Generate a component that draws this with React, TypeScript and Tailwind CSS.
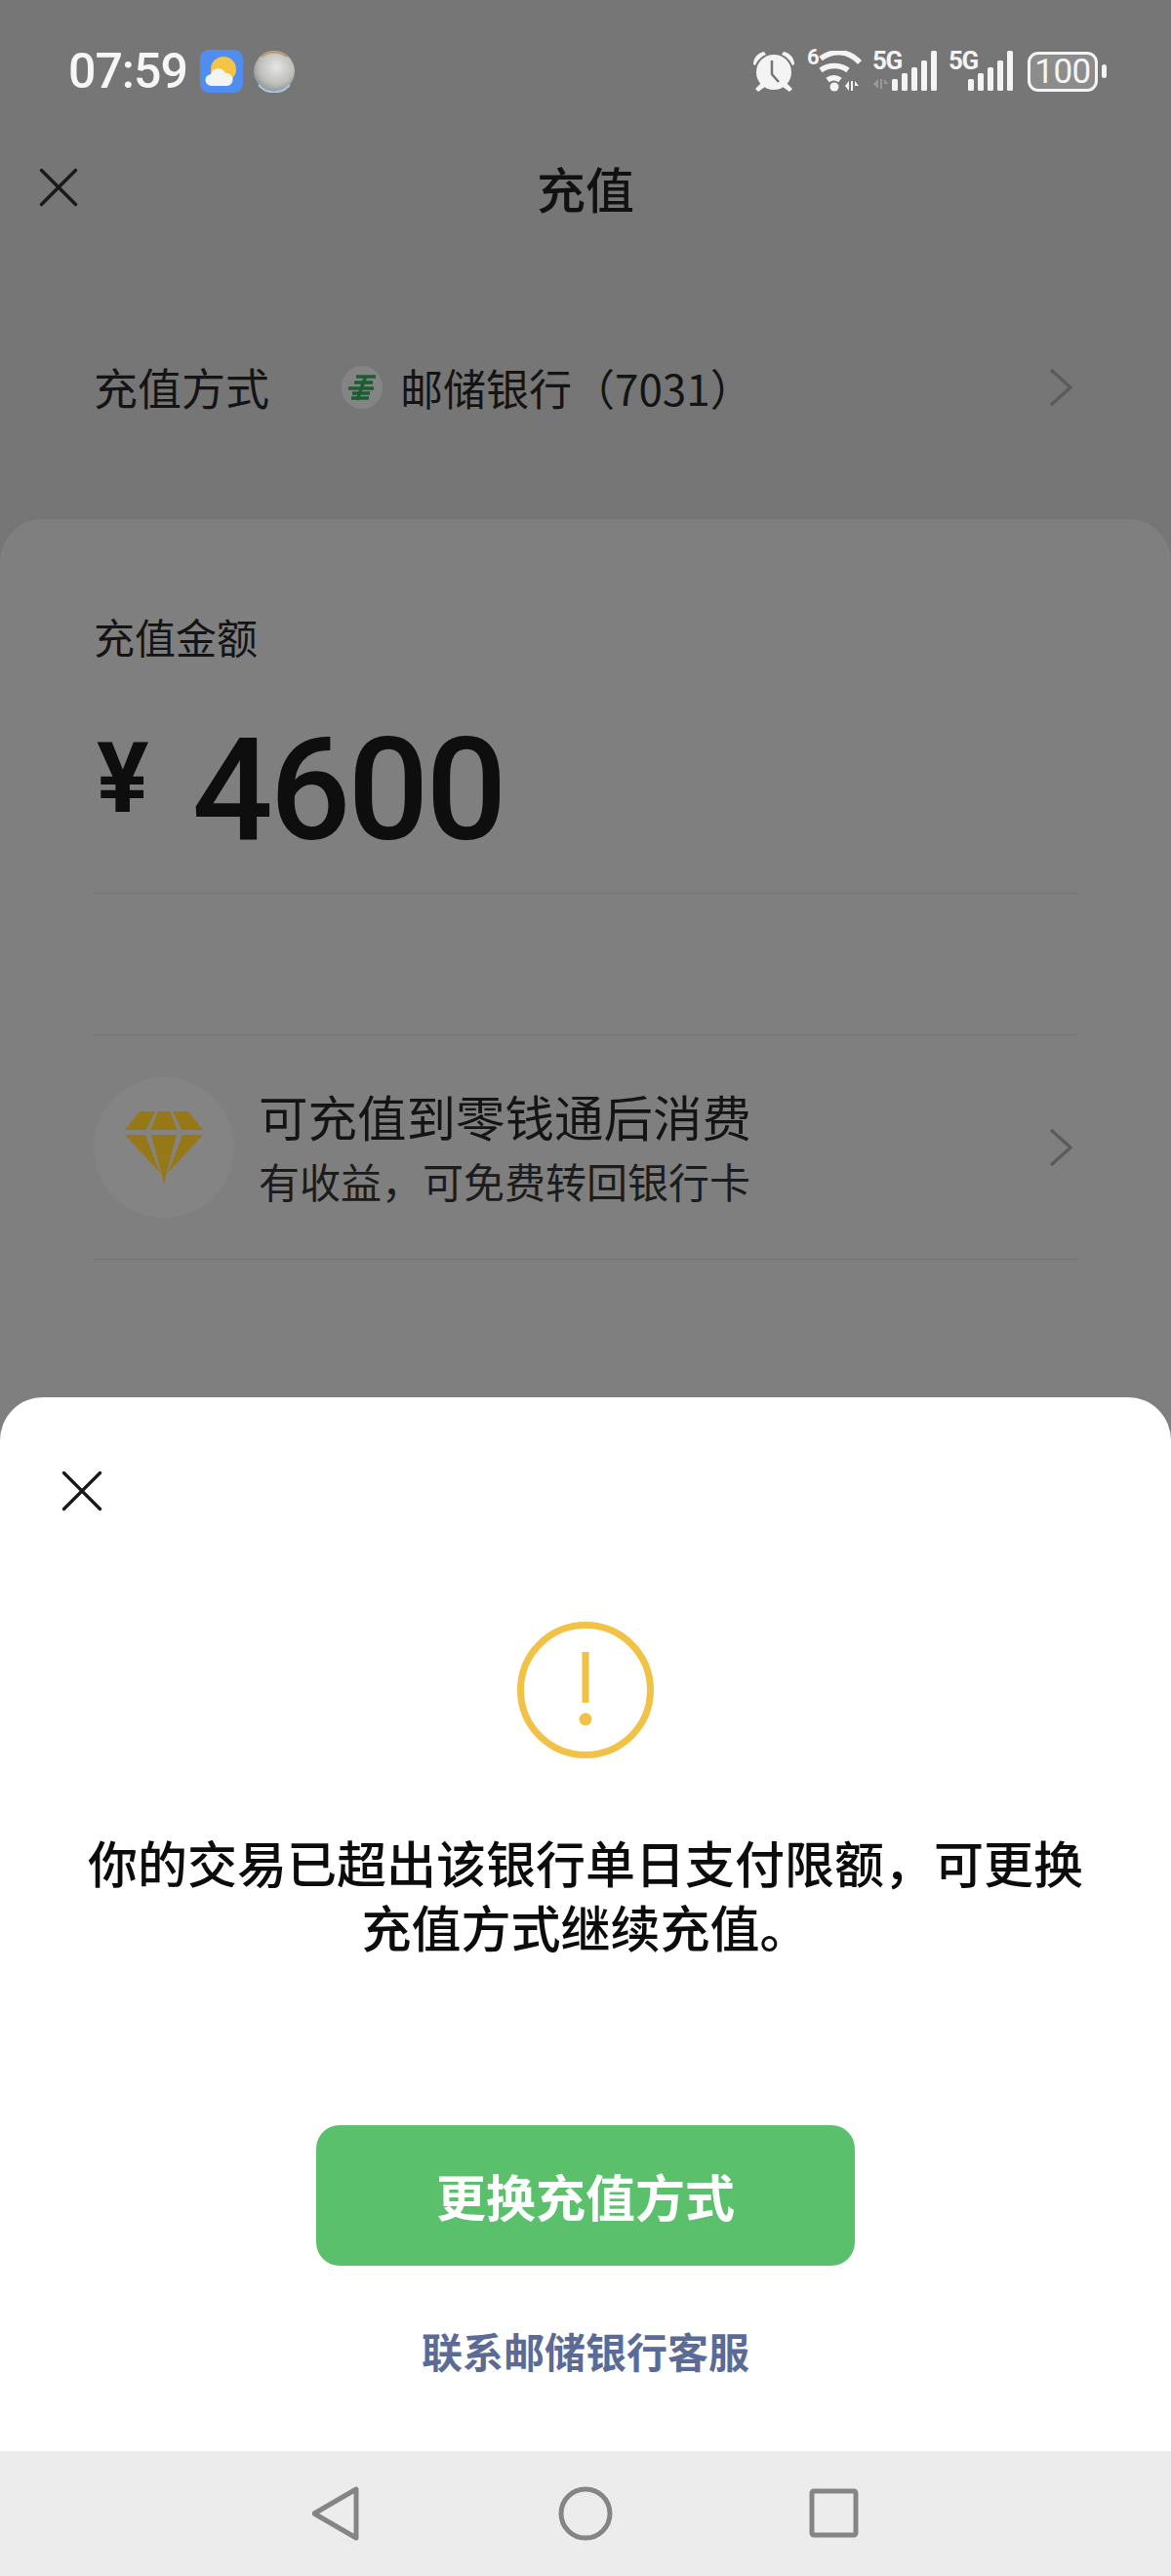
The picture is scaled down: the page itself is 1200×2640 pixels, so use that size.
import { X } from 'lucide-react';

const cjk = "font-['Noto_Sans_CJK_SC',sans-serif]";

function WeatherIcon() {
  return (
    <svg width="44" height="44" viewBox="0 0 44 44">
      <rect width="44" height="44" rx="9" fill="#4f8ef0" />
      <circle cx="24" cy="20" r="13" fill="#f6c445" />
      <path d="M12 37a6 6 0 0 1-1-12 8 8 0 0 1 15-1 6.5 6.5 0 0 1 2 13z" fill="#f2f4f2" />
    </svg>
  );
}

function BubbleIcon() {
  return (
    <svg width="44" height="44" viewBox="0 0 44 44">
      <defs>
        <radialGradient id="bubble" cx="0.55" cy="0.4" r="0.6">
          <stop offset="0" stopColor="#e6e6e4" />
          <stop offset="0.7" stopColor="#bdbdba" />
          <stop offset="1" stopColor="#8f9599" />
        </radialGradient>
      </defs>
      <circle cx="22" cy="22" r="21" fill="url(#bubble)" />
      <path d="M9 7a21 21 0 0 1 26 0" stroke="#b39a6a" strokeWidth="2" fill="none" />
      <path d="M6 36a21 21 0 0 0 32 0" stroke="#a9c6dc" strokeWidth="2" fill="none" />
    </svg>
  );
}

function AlarmIcon() {
  return (
    <svg width="42" height="42" viewBox="0 0 42 42" fill="#f4f4f4">
      <circle cx="21" cy="22" r="18" />
      <path d="M0 14C0 7 5 2 11 1l2 3C8 6 4 10 2 15zM42 14C42 7 37 2 31 1l-2 3c5 2 9 6 11 11z" />
      <path d="M8 33l-6 6 3 3 7-5zM34 33l6 6-3 3-7-5z" />
      <path d="M19 10v14l7 8" stroke="#767676" strokeWidth="2.5" fill="none" />
    </svg>
  );
}

function WifiIcon() {
  return (
    <div className="relative w-[56px] h-[42px]">
      <span className="absolute left-0 top-[-7px] text-[22px] leading-[28px] font-bold text-[#f4f4f4] font-['Roboto',sans-serif]">6</span>
      <svg width="56" height="42" viewBox="0 0 56 42" fill="none" stroke="#f4f4f4" strokeWidth="5.5">
        <path d="M14 8C26-1 42-1 54 12" />
        <path d="M14 20c8-6 20-6 28 0" />
        <path d="M21 30c4-3 9-3 13 0" />
        <circle cx="28" cy="37" r="4.5" fill="#f4f4f4" stroke="none" />
        <path d="M39 36l4-5v10zM45 31h2v10h-2zM49 31l4 5h-4z" fill="#f4f4f4" stroke="none" />
      </svg>
    </div>
  );
}

function SignalIcon({ arrows }: { arrows?: boolean }) {
  return (
    <div className="relative w-[66px] h-[42px]">
      <span className="absolute left-0 top-[-6px] text-[26px] leading-[32px] font-bold tracking-[-1.5px] text-[#f4f4f4] font-['Roboto',sans-serif]">5G</span>
      <svg width="66" height="42" viewBox="0 0 66 42" fill="#f4f4f4">
        {arrows && <path d="M1 34l5-5v10zM8 29h2v10H8zM12 29l4 5h-4z" fill="#9a9a9a" />}
        <rect x="20" y="29" width="6" height="12" rx="1.5" />
        <rect x="30" y="23" width="6" height="18" rx="1.5" />
        <rect x="40" y="17" width="6" height="24" rx="1.5" />
        <rect x="50" y="10" width="6" height="31" rx="1.5" />
        <rect x="60" y="0" width="6" height="41" rx="1.5" />
      </svg>
    </div>
  );
}

function Battery() {
  return (
    <div className="flex items-center gap-[4px]">
      <div className="w-[72px] h-[41px] rounded-[11px] border-[3.5px] border-[#f4f4f4] bg-[#8c8c8c] flex items-center justify-center">
        <span className="text-[35px] leading-none tracking-[-0.5px] text-[#f4f4f4] font-['Roboto',sans-serif]">100</span>
      </div>
      <div className="w-[5px] h-[14px] rounded-full bg-[#f4f4f4]" />
    </div>
  );
}

function BankLogo() {
  return (
    <div className="w-[42px] h-[44px] rounded-full bg-[#848484] flex items-center justify-center">
      <svg width="30" height="28" viewBox="0 0 30 28" fill="none" stroke="#1c5e30" strokeWidth="3.5">
        <path d="M9 3h20M7 9h19M1 15h26M5 20h18M4 25h18" />
        <path d="M19 2L10 27" />
      </svg>
    </div>
  );
}

function Chevron({ className }: { className?: string }) {
  return (
    <svg className={className} width="24" height="38" viewBox="0 0 24 38" fill="none" stroke="#5c5c5c" strokeWidth="3.5">
      <path d="M2 1l20 18L2 37" />
    </svg>
  );
}

function Diamond() {
  return (
    <svg width="80" height="74" viewBox="0 0 80 74" fill="#967818">
      <path d="M15 0h16l-9 19H0z" />
      <path d="M34 0h12l8 19H26z" />
      <path d="M49 0h16l15 19H58z" />
      <path d="M0 24h21l15 39z" />
      <path d="M27 24h26L40 74z" />
      <path d="M59 24h21L44 63z" />
    </svg>
  );
}

export default function App() {
  return (
    <div className={`w-[1200px] h-[2640px] flex flex-col bg-[#767676] overflow-hidden ${cjk}`}>
      {/* Status bar */}
      <div className="h-[146px] pl-[70px] pr-[66px] flex items-center justify-between">
        <div className="flex items-center">
          <span className="text-[50px] font-medium text-[#f6f6f6] tracking-[-1px] font-['Roboto',sans-serif] leading-none">07:59</span>
          <div className="ml-[13px] flex gap-[10px]">
            <WeatherIcon />
            <BubbleIcon />
          </div>
        </div>
        <div className="flex items-center">
          <AlarmIcon />
          <div className="ml-[13px]"><WifiIcon /></div>
          <div className="ml-[11px]"><SignalIcon arrows /></div>
          <div className="ml-[12px]"><SignalIcon /></div>
          <div className="ml-[15px]"><Battery /></div>
        </div>
      </div>

      {/* Header */}
      <div className="relative h-[98px] pb-[6px] flex items-center justify-center">
        <X className="absolute left-[25px] w-[70px] h-[70px] text-[#1a1a1a]" strokeWidth={1.2} />
        <span className="text-[50px] font-medium text-[#111]">充值</span>
      </div>

      {/* Pay method */}
      <div className="h-[288px] pt-[18px] pl-[96px] pr-[101px] flex items-center text-[#141414]">
        <span className="w-[254px] text-[45px]">充值方式</span>
        <BankLogo />
        <span className="ml-[18px] text-[44px]">邮储银行（7031）</span>
        <Chevron className="ml-auto" />
      </div>

      {/* Amount card */}
      <div className="flex-1 -mb-[44px] bg-[#7f7f7f] rounded-t-[44px] px-[96px] flex flex-col">
        <div className="h-[384px] flex flex-col border-b border-[#737373]">
          <span className="mt-[91px] text-[42px] leading-[58px] text-[#141414]">充值金额</span>
          <div className="mt-[57px] flex items-center text-[#0e0e0e] font-['Roboto',sans-serif] font-medium leading-none">
            <span className="ml-[3px] mb-[26px] text-[100px] font-bold">¥</span>
            <span className="ml-[44px] text-[146px] tracking-[-3px]">4600</span>
          </div>
        </div>
        <div className="mt-[144px] h-[231px] flex items-center border-y border-[#737373]">
          <div className="w-[144px] h-[144px] rounded-full bg-[#848484] flex items-center justify-center">
            <Diamond />
          </div>
          <div className="ml-[25px] flex flex-col">
            <span className="text-[50.5px] leading-[68px] text-[#141414]">可充值到零钱通后消费</span>
            <span className="text-[42px] leading-[66px] text-[#1c1c1c]">有收益，可免费转回银行卡</span>
          </div>
          <Chevron className="ml-auto mr-[5px]" />
        </div>
      </div>

      {/* Bottom sheet */}
      <div className="h-[1080px] bg-white rounded-t-[44px] relative flex flex-col items-center">
        <X className="self-start ml-[47px] mt-[59px] w-[74px] h-[74px] text-[#1a1a1a]" strokeWidth={1.1} />
        <svg className="mt-[97px]" width="140" height="140" viewBox="0 0 140 140" fill="none">
          <circle cx="70" cy="70" r="66.5" stroke="#f2c246" strokeWidth="7" />
          <rect x="66.5" y="31" width="7" height="52" fill="#f2c246" />
          <circle cx="70" cy="100" r="6.5" fill="#f2c246" />
        </svg>
        <p className="mt-[73px] w-[1040px] text-center text-[51px] leading-[66px] font-medium text-[#0c0c0c]">
          你的交易已超出该银行单日支付限额，可更换充值方式继续充值。
        </p>
        <button className="mt-[171px] w-[552px] h-[144px] rounded-[24px] bg-[#5ac06c] text-white text-[51px] font-bold">
          更换充值方式
        </button>
        <span className="mt-[58px] text-[42px] leading-[58px] font-bold text-[#5b6b96]">联系邮储银行客服</span>
      </div>

      {/* Navigation bar */}
      <div className="h-[128px] bg-[#ececec] flex items-start justify-center">
        <svg className="mt-[36px]" width="560" height="56" viewBox="0 0 560 56" fill="none" stroke="#858585" strokeWidth="5" strokeLinejoin="round">
          <path d="M45 3v50L2 28z" />
          <circle cx="280" cy="28" r="25" />
          <rect x="512" y="5" width="45" height="45" rx="2" />
        </svg>
      </div>
    </div>
  );
}
